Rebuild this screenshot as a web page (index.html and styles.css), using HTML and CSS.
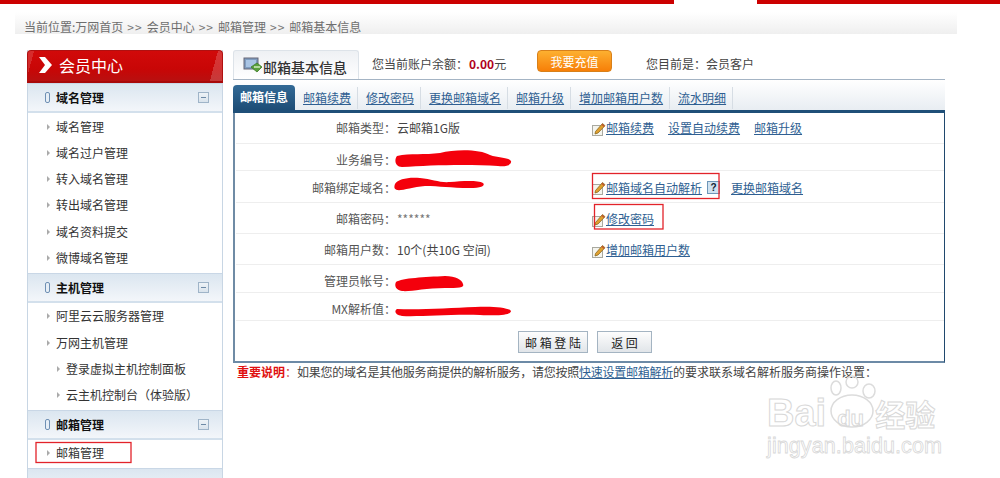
FILE: index.html
```html
<!DOCTYPE html>
<html lang="zh-CN">
<head>
<meta charset="utf-8">
<title>邮箱基本信息</title>
<link rel="stylesheet" href="styles.css">
</head>
<body>
<svg width="0" height="0" class="defs">
  <symbol id="pencil" viewBox="0 0 15 15">
    <rect x="1.500" y="4.500" width="10" height="10" fill="#f4f4ee" stroke="#a9a9a0"/>
    <path d="M4.500 10.500 L11.500 2.500 L14 4.700 L7 12 L4 13 Z" fill="#e0a030" stroke="#8a6a20" stroke-width=".8"/>
    <path d="M10.800 3.300 L13.300 5.500" stroke="#c05030" stroke-width="1.200"/>
  </symbol>
</svg>
<div class="topbar"><div class="red red-a"></div><div class="red red-b"></div></div>
<div class="crumbs">当前位置:万网首页<span class="sep">&gt;&gt;</span>会员中心<span class="sep">&gt;&gt;</span>邮箱管理<span class="sep">&gt;&gt;</span>邮箱基本信息</div>
<div class="page">
  <aside class="side">
    <div class="side-title">
      <svg class="chev" width="15" height="18" viewBox="0 0 15 18"><path d="M1 1 H7 L14 9 L7 17 H1 L7 9 Z" fill="#fff"/></svg>
      <span>会员中心</span>
    </div>
    <div class="group"><i class="pill"></i><b>域名管理</b><i class="minus"></i></div>
    <ul class="items">
      <li>域名管理</li><li>域名过户管理</li><li>转入域名管理</li><li>转出域名管理</li><li>域名资料提交</li><li>微博域名管理</li>
    </ul>
    <div class="group"><i class="pill"></i><b>主机管理</b><i class="minus"></i></div>
    <ul class="items">
      <li>阿里云云服务器管理</li><li>万网主机管理</li><li class="sub">登录虚拟主机控制面板</li><li class="sub">云主机控制台（体验版）</li>
    </ul>
    <div class="group"><i class="pill"></i><b>邮箱管理</b><i class="minus"></i></div>
    <ul class="items items-last">
      <li>邮箱管理</li>
    </ul>
    <div class="group"></div>
  </aside>
  <main class="main">
    <div class="head">
      <div class="head-tab">
        <svg class="head-icon" width="20" height="18" viewBox="0 0 20 18">
          <rect x="1" y="2" width="14" height="11" fill="#7f9cc0" stroke="#667"/>
          <rect x="3" y="4" width="10" height="7" fill="#a9c4e4"/>
          <path d="M8 11 L14 7 L19 11 L14 16 Z" fill="#5aa03c" stroke="#3d7a28" stroke-width=".8"/>
          <path d="M11 11 H17" stroke="#d8f0c8" stroke-width="1.400"/>
        </svg>
        <span>邮箱基本信息</span>
      </div>
      <span class="bal">您当前账户余额：<b>0.00</b>元</span>
      <button class="charge">我要充值</button>
      <span class="level">您目前是：会员客户</span>
    </div>
    <nav class="tabs">
      <span class="tab-on">邮箱信息</span>
      <span class="tab"><a>邮箱续费</a></span>
      <span class="tab"><a>修改密码</a></span>
      <span class="tab"><a>更换邮箱域名</a></span>
      <span class="tab"><a>邮箱升级</a></span>
      <span class="tab"><a>增加邮箱用户数</a></span>
      <span class="tab"><a>流水明细</a></span>
    </nav>
    <section class="box">
      <div class="row r1"><span class="k">邮箱类型：</span><span class="v">云邮箱1G版</span>
        <span class="acts"><svg class="pen"><use href="#pencil"/></svg><a>邮箱续费</a><a class="gap">设置自动续费</a><a class="gap">邮箱升级</a></span></div>
      <div class="row r2"><span class="k">业务编号：</span><span class="v"></span></div>
      <div class="row r3"><span class="k">邮箱绑定域名：</span><span class="v"></span>
        <span class="acts"><svg class="pen"><use href="#pencil"/></svg><a>邮箱域名自动解析</a><i class="help">?</i><a class="gap2">更换邮箱域名</a></span></div>
      <div class="row r4"><span class="k">邮箱密码：</span><span class="v grey">******</span>
        <span class="acts"><svg class="pen"><use href="#pencil"/></svg><a>修改密码</a></span></div>
      <div class="row r5"><span class="k">邮箱用户数：</span><span class="v">10个(共10G 空间)</span>
        <span class="acts"><svg class="pen"><use href="#pencil"/></svg><a>增加邮箱用户数</a></span></div>
      <div class="row r6"><span class="k">管理员帐号：</span><span class="v"></span></div>
      <div class="row r7"><span class="k">MX解析值：</span><span class="v"></span></div>
      <div class="btns"><button class="btn b-login">邮 箱 登 陆</button><button class="btn b-back">返 回</button></div>
    </section>
    <p class="note"><b>重要说明</b><em>：</em><span class="note-t">如果您的域名是其他服务商提供的解析服务，请您按照<a>快速设置邮箱解析</a></span>的要求联系域名解析服务商操作设置：</p>
  </main>
</div>

<svg class="scribble" width="1000" height="478" viewBox="0 0 1000 478">
  <g fill="#f4000c">
    <path d="M397 156 C410 153 425 155 440 153 C455 149 480 149 490 155 C498 158 508 157 511 161 C512 165 506 167 498 166 C470 164 430 165 402 167 C395 167 394 160 397 156 Z"/>
    <path d="M395 184 C398 179 408 177 420 178 C432 179 440 183 450 182 C462 181 478 180 483 183 C486 186 480 188 470 188 C450 188 440 186 425 186 C412 187 402 191 397 190 C394 189 394 187 395 184 Z"/>
    <path d="M396 282 C402 278 425 277 445 276 C456 276 462 280 463 284 C465 288 458 288 445 288 C425 288 410 292 402 291 C396 290 394 286 396 282 Z"/>
    <path d="M397 309 C420 310 450 308 475 307 C490 306 508 307 511 311 C511 315 500 316 480 315 C450 314 420 317 402 316 C395 315 394 311 397 309 Z"/>
  </g>
  <g fill="none" stroke="#e2232a" stroke-width="1.300">
    <rect x="36" y="442.500" width="95" height="20"/>
    <rect x="592.500" y="173.500" width="126.500" height="25"/>
    <rect x="594.500" y="204.500" width="68.500" height="24.500"/>
  </g>
  <g fill="none" stroke="#dcdcdc" stroke-width="1.500">
    <ellipse cx="852" cy="411" rx="21" ry="16"/>
    <ellipse cx="836" cy="388" rx="5" ry="7"/>
    <ellipse cx="852" cy="382" rx="6" ry="6"/>
    <ellipse cx="869" cy="391" rx="6" ry="7"/>
  </g>
</svg>
<div class="mark">
  <div class="mark-a"><span>Bai</span><span class="du">du</span><span class="jy">经验</span></div>
  <div class="mark-b">jingyan.baidu.com</div>
</div>
</body>
</html>
```

FILE: styles.css
```css
* { box-sizing: border-box; }
html, body { margin: 0; padding: 0; height: 478px; overflow: hidden; background: #fff; }
body { font: 12px/16px "Noto Sans CJK SC", "Liberation Sans", sans-serif; color: #444; position: relative; }
.defs { position: absolute; }
a { color: #2f5f92; text-decoration: underline; }
ul { list-style: none; margin: 0; padding: 0; }

.topbar { display: flex; height: 4px; }
.red { background: #cc0000; }
.red-a { width: 674px; }
.red-b { flex: 1; margin-left: 83px; }

.crumbs { margin: 8px 0 0 15px; width: 942px; height: 22px; padding: 7px 0 0 9px; line-height: 16px; color: #6e6e6e;
  background: linear-gradient(#fff, #efefef); }
.sep { margin: 0 4px; letter-spacing: 1px; color: #777; }

.page { display: flex; margin: 16px 0 0 27px; align-items: flex-start; }
.side { width: 196px; flex: none; border-left: 1px solid #c8d6e4; border-right: 1px solid #c8d6e4; height: 440px; }
.side-title { margin: 0 -1px; height: 33px; display: flex; align-items: center; padding: 0 0 2px 10px; color: #fff; font-size: 16px;
  border-radius: 4px 4px 0 0; border: 1px solid #b01010; border-bottom: 2px solid #a80a0a;
  background: linear-gradient(105deg, rgba(255,255,255,.14) 3%, transparent 3%, transparent 94%, rgba(255,255,255,.18) 94%), linear-gradient(#d10a0a, #c80606 60%, #b81010); }
.chev { margin-right: 6px; }
.group { height: 30px; display: flex; align-items: center; padding-left: 17px; color: #111; font-size: 12px;
  border-top: 1px solid #c9d7e6; border-bottom: 2px solid #d3e0ec;
  background: linear-gradient(#dbe6f0, #f3f6fa); }
.group b { margin-left: 6px; flex: 1; font-weight: 700; padding-top: 1px; }
.pill { width: 5px; height: 11px; border: 1px solid #6f90b4; border-radius: 2px; background: #e6eef6; }
.minus { width: 11px; height: 11px; margin-right: 13px; border: 1px solid #9fb4c8; background: linear-gradient(#eef3f7, #d9e3ec); position: relative; }
.minus::after { content: ""; position: absolute; left: 2px; right: 2px; top: 4px; height: 1px; background: #6e8aa6; }
.items { padding: .5px 0 1.500px; }
.items-last { padding: 0 0 2px; }
.items li { height: 26.300px; line-height: 26px; padding-left: 28px; color: #333; position: relative; }
.items-last li { line-height: 25px; }
.items li::before { content: ""; position: absolute; left: 19px; top: 10px; width: 0; height: 0; border-style: solid; border-width: 3px 0 3px 3px; border-color: transparent transparent transparent #aaa; }
.items li.sub { padding-left: 38px; }
.items li.sub::before { left: 29px; }

.main { width: 712px; margin-left: 10px; flex: none; }
.head { height: 30px; display: flex; align-items: center; border-bottom: 1px solid #a4b4c4; padding-bottom: 2px; }
.head-tab { width: 126px; height: 29px; margin-bottom: -2px; display: flex; align-items: center; padding: 3px 0 0 9px; gap: 0; border: 1px solid #dde3e9; border-bottom: 0;
  border-radius: 3px 3px 0 0; background: linear-gradient(#eef1f4, #fff); font-size: 14px; font-weight: 500; color: #333; }
.head-icon { flex: none; margin-top: -4px; }
.bal { margin-left: 13px; width: 165px; color: #444; }
.bal b { color: #b00020; margin-left: 1px; }
.charge { width: 75px; height: 22px; padding: 0; margin-top: -5px; border: 1px solid #d8801a; border-radius: 4px; color: #fff; font: 12px "Noto Sans CJK SC", sans-serif;
  background: linear-gradient(#fdb030, #f77f08); }
.level { margin-left: 34px; }

.tabs { height: 33px; display: flex; align-items: flex-end; border-bottom: 3px solid #1f4f78;
  background: linear-gradient(#fff, #e8edf2); }
.tab-on { width: 62px; height: 25px; line-height: 24px; text-align: center; color: #fff; font-weight: 700; border-radius: 4px 4px 0 0;
  background: linear-gradient(#336a96, #1d4d76); }
.tab { padding: 0 6px 0 8px; height: 22px; line-height: 22px; border-right: 1px solid #d6dde4; margin-bottom: 1px; }

.box { height: 250px; border: 1px solid #20496e; border-left: 2px solid #6f8ba5; border-bottom: 2px solid #6c8aa6; border-top: 0; }
.row { display: flex; align-items: center; border-bottom: 1px solid #eee; margin: 0 0 0 1px; }
.r1 { height: 31px; }
.r2 { height: 27px; padding-top: 6px; }
.r3 { height: 32px; padding-top: 2px; }
.r4 { height: 31px; padding-top: 2px; }
.r5 { height: 31px; padding-top: 2px; }
.r6 { height: 28px; padding-top: 4px; }
.r7 { height: 28px; padding-top: 4px; }
.k { width: 160px; text-align: right; color: #555; flex: none; }
.v { width: 195px; padding-left: 1px; flex: none; color: #444; }
.grey { color: #777; }
.acts { display: flex; align-items: center; }
.pen { width: 15px; height: 15px; margin-right: 0; }
.gap { margin-left: 14px; }
.gap2 { margin-left: 11px; }
.help { width: 13px; height: 13px; margin-left: 5px; font: 700 10px/11px "Liberation Sans", sans-serif; text-align: center; color: #123; border: 1px solid #6f96b8; background: #cfe2f0; }
.btns { display: flex; gap: 9px; padding: 10px 0 0 283px; }
.btn { height: 22px; padding: 0; border: 1px solid #a4b4c2; color: #222; font: 12px "Noto Sans CJK SC", sans-serif; background: linear-gradient(#fdfdfd, #e1e5e9); }
.b-login { width: 70px; }
.b-back { width: 55px; }

.note { margin: 1px 0 0 4px; color: #444; white-space: nowrap; }
.note b { color: #e01010; }
.note em { font-style: normal; color: #d04040; }
.note-t { letter-spacing: -.250px; }

.scribble { position: absolute; left: 0; top: 0; pointer-events: none; }
.mark { position: absolute; left: 767px; top: 393px; color: transparent; font-family: "Liberation Sans", sans-serif; }
.mark-a { height: 40px; display: flex; font-size: 38px; line-height: 40px; font-weight: 700; -webkit-text-stroke: 1px #d8d8d8; }
.du { font-size: 22px; margin: 6px 0 0 11px; width: 38px; }
.jy { font-size: 30px; font-family: "Noto Sans CJK SC", sans-serif; }
.mark-b { margin-top: 0; font-size: 21.500px; line-height: 26px; letter-spacing: .100px; -webkit-text-stroke: .8px #d8d8d8; }
```
